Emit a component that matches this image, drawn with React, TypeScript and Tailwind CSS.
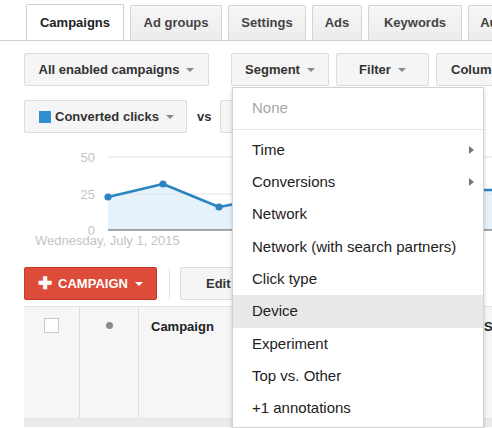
import { ReactNode } from 'react'

const tabs = [
  { label: 'Campaigns', w: 'w-[98px]', active: true },
  { label: 'Ad groups', w: 'w-[92px]' },
  { label: 'Settings', w: 'w-[78px]' },
  { label: 'Ads', w: 'w-[50px]' },
  { label: 'Keywords', w: 'w-[94px]' },
  { label: 'Audiences', w: 'w-[90px]' },
]

const segments = [
  { label: 'Time', sub: true },
  { label: 'Conversions', sub: true },
  { label: 'Network' },
  { label: 'Network (with search partners)' },
  { label: 'Click type' },
  { label: 'Device', hover: true },
  { label: 'Experiment' },
  { label: 'Top vs. Other' },
  { label: '+1 annotations' },
]

function Caret({ className = 'border-t-[#888]' }: { className?: string }) {
  return <span className={`ml-[7px] inline-block h-0 w-0 border-x-[4px] border-t-[4px] border-x-transparent ${className}`} />
}

function Btn({ children, className = '' }: { children: ReactNode; className?: string }) {
  return (
    <div className={`flex h-[33px] shrink-0 items-center justify-center overflow-hidden whitespace-nowrap rounded-[2px] border border-[#dcdcdc] bg-[#f5f5f5] text-[13px] font-bold text-[#333] ${className}`}>
      {children}
    </div>
  )
}

function Chart() {
  const pts: [number, number][] = [[108, 57], [163, 44], [219, 67], [240, 63], [290, 60], [345, 56], [400, 53], [450, 50], [492, 50]]
  const line = pts.map(p => p.join(',')).join(' ')
  return (
    <svg width="492" height="96" className="block">
      <polygon points={`108,90 ${line} 492,90`} fill="#e6f2fb" />
      <line x1="108" y1="17" x2="492" y2="17" stroke="#e3e3e3" />
      <line x1="108" y1="54" x2="492" y2="54" stroke="#e3e3e3" />
      <line x1="108" y1="90" x2="492" y2="90" stroke="#555" strokeWidth="1.2" />
      <g fontFamily="'Liberation Sans', Arial, sans-serif" fontSize="13" fill="#c4c4c4" textAnchor="end">
        <text x="95" y="22">50</text>
        <text x="95" y="59">25</text>
        <text x="95" y="95">0</text>
      </g>
      <polyline points={line} fill="none" stroke="#2a84c2" strokeWidth="2.5" strokeLinejoin="round" />
      {pts.slice(0, 3).map(([x, y]) => <circle key={x} cx={x} cy={y} r="3.6" fill="#2a84c2" />)}
    </svg>
  )
}

export default function App() {
  return (
    <div className="relative h-[428px] w-[492px] overflow-hidden bg-white font-['Liberation_Sans',Arial,sans-serif]">
      {/* tabs */}
      <div className="flex h-[41px] items-end gap-[6px] overflow-hidden border-b border-[#cfcfcf] pl-[26px]">
        {tabs.map(t =>
          t.active ? (
            <div key={t.label} className={`-mb-px flex h-[37px] shrink-0 items-center justify-center rounded-t-[2px] border border-b-0 border-[#cfcfcf] bg-white text-[13px] font-bold text-[#222] ${t.w}`}>
              {t.label}
            </div>
          ) : (
            <div key={t.label} className={`flex h-[35px] shrink-0 items-center justify-center rounded-t-[2px] border border-b-0 border-[#d3d3d3] bg-gradient-to-b from-[#f7f7f7] to-[#ececec] text-[13px] font-bold text-[#444] ${t.w}`}>
              {t.label}
            </div>
          )
        )}
      </div>

      {/* view / segment row */}
      <div className="mt-[12px] flex pl-[24px]">
        <Btn className="w-[185px]">All enabled campaigns<Caret /></Btn>
        <Btn className="ml-[22px] w-[98px] border-[#6a9ae6] bg-[#ececec]">Segment<Caret /></Btn>
        <Btn className="ml-[7px] w-[93px]">Filter<Caret /></Btn>
        <Btn className="ml-[7px] w-[100px] justify-start pl-[14px]">Columns<Caret /></Btn>
      </div>

      {/* metric row */}
      <div className="mt-[14px] flex items-center pl-[24px]">
        <Btn className="w-[163px] justify-start pl-[14px]">
          <span className="mr-[4px] h-[12px] w-[12px] bg-[#2f8fd0]" />
          Converted clicks<Caret />
        </Btn>
        <span className="ml-[10px] text-[13px] font-bold text-[#333]">vs</span>
        <Btn className="ml-[9px] w-[150px]">None<Caret /></Btn>
      </div>

      <div className="mt-[7px]">
        <Chart />
        <div className="-mt-[3px] pl-[35px] text-[13px] leading-[16px] text-[#c4c4c4]">Wednesday, July 1, 2015</div>
      </div>

      {/* actions */}
      <div className="mt-[18px] flex items-center pl-[24px]">
        <div className="flex h-[33px] w-[133px] items-center justify-center rounded-[2px] border border-[#c8392a] bg-[#dd4b39] text-[13px] font-bold text-white">
          <span className="mr-[6px] text-[17px] leading-none">✚</span>
          CAMPAIGN
          <Caret className="border-t-white" />
        </div>
        <div className="ml-[12px] h-[30px] w-px bg-[#e0e0e0]" />
        <Btn className="ml-[10px] w-[110px] justify-start pl-[25px]">Edit<Caret /></Btn>
      </div>

      {/* table */}
      <div className="ml-[24px] mt-[6px] flex h-[113px] overflow-hidden border-y border-[#e2e2e2] bg-[#f6f6f6]">
        <div className="flex w-[56px] shrink-0 justify-center border-r border-[#e0e0e0] pt-[11px]">
          <div className="h-[15px] w-[15px] border border-[#c9c9c9] bg-white" />
        </div>
        <div className="flex w-[59px] shrink-0 justify-center border-r border-[#e0e0e0] pt-[15px]">
          <div className="h-[7px] w-[7px] rounded-full bg-[#8a8a8a]" />
        </div>
        <div className="w-[336px] shrink-0 border-r border-[#e0e0e0] pl-[12px] pt-[10px] text-[13px] font-bold text-[#222]">Campaign</div>
        <div className="shrink-0 pl-[9px] pt-[10px] text-[13px] font-bold text-[#222]">Status</div>
      </div>
      <div className="ml-[24px] h-[8px] bg-[#ebebeb]" />

      {/* segment menu */}
      <div className="absolute left-[232px] top-[87px] w-[252px] border border-[#d2d2d2] bg-white pb-[2px] shadow-[0_2px_4px_rgba(0,0,0,0.2)]">
        <div className="flex h-[41px] items-center pl-[19px] text-[15px] text-[#a8a8a8]">None</div>
        <div className="h-px bg-[#e5e5e5]" />
        <div className="pt-[4px]">
          {segments.map(s => (
            <div key={s.label} className={`flex h-[32.3px] items-center justify-between pl-[19px] pr-[9px] text-[15px] text-[#222] ${s.hover ? 'bg-[#e8e8e8]' : ''}`}>
              {s.label}
              {s.sub && <span className="h-0 w-0 border-y-[4px] border-l-[5px] border-y-transparent border-l-[#777]" />}
            </div>
          ))}
        </div>
      </div>
    </div>
  )
}
